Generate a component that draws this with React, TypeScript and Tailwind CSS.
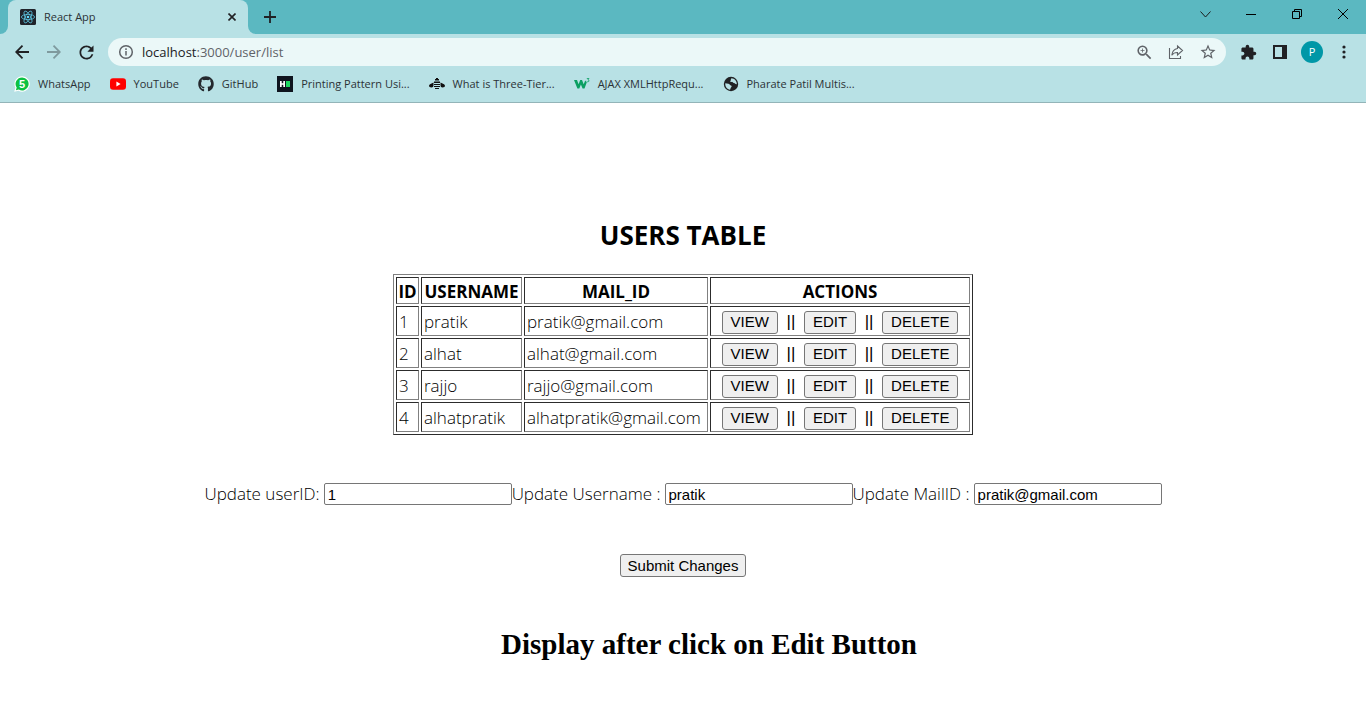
import type { ReactNode } from 'react';
import { FaGithub } from 'react-icons/fa';
import { MdExtension, MdStarBorder, MdZoomIn, MdRefresh } from 'react-icons/md';

type User = { id: number; name: string; mail: string };

const users: User[] = [
  { id: 1, name: 'pratik', mail: 'pratik@gmail.com' },
  { id: 2, name: 'alhat', mail: 'alhat@gmail.com' },
  { id: 3, name: 'rajjo', mail: 'rajjo@gmail.com' },
  { id: 4, name: 'alhatpratik', mail: 'alhatpratik@gmail.com' },
];

const ReactLogo = () => (
  <svg width="16" height="16" viewBox="0 0 16 16" className="shrink-0">
    <rect width="16" height="16" rx="1.5" fill="#20232a" />
    <g fill="none" stroke="#5cc4e0" strokeWidth="0.8">
      <ellipse cx="8" cy="8" rx="6.6" ry="2.6" />
      <ellipse cx="8" cy="8" rx="6.6" ry="2.6" transform="rotate(60 8 8)" />
      <ellipse cx="8" cy="8" rx="6.6" ry="2.6" transform="rotate(120 8 8)" />
    </g>
    <circle cx="8" cy="8" r="1.3" fill="#61dafb" />
  </svg>
);

const WhatsAppIcon = () => (
  <span className="relative flex h-4 w-4 shrink-0 items-center justify-center">
    <svg width="16" height="16" viewBox="0 0 16 16" className="absolute inset-0">
      <path d="M8.2.2a7.7 7.7 0 1 1-3.7 14.5L.2 15.8l1.2-4.2A7.7 7.7 0 0 1 8.2.2Z" fill="#fff" />
      <path d="M8.2 1.4a6.5 6.5 0 1 1-3.4 12.1l-2.9.8.8-2.8A6.5 6.5 0 0 1 8.2 1.4Z" fill="#0cc143" />
    </svg>
    <span className="relative font-['Liberation_Sans',sans-serif] text-[11px] leading-4 font-bold text-white">5</span>
  </span>
);

const YouTubeIcon = () => (
  <svg width="16" height="16" viewBox="0 0 16 16" className="shrink-0">
    <rect y="2.3" width="16" height="11.4" rx="3" fill="#f00" />
    <path d="M6.4 5.6v4.8L10.6 8Z" fill="#fff" />
  </svg>
);

const HackerRankIcon = () => (
  <svg width="16" height="16" viewBox="0 0 16 16" className="shrink-0">
    <rect width="16" height="16" fill="#0e141e" />
    <path d="M3 5h1.7v2.2h1.600V5H8v6H6.300V8.800H4.700V11H3Z" fill="#fff" />
    <rect x="9" y="5" width="4" height="6" fill="#1ed760" />
  </svg>
);

const BeeIcon = () => (
  <svg width="16" height="16" viewBox="0 0 16 16" className="shrink-0" fill="#111">
    <path d="M7 2h2v1H7ZM6 3h4v1.500H6ZM5 5.500h6v1.500H5ZM5 8h6v1H5ZM5 10h6v1H5ZM6 12h4v1H6Z" />
    <path d="M4.500 6.500v2.500c0 1.800-.9 2.500-2 2.500-2.600 0-3.200-2.300-1.500-3.200ZM11.500 6.500v2.500c0 1.800.9 2.500 2 2.500 2.600 0 3.200-2.300 1.500-3.200Z" />
  </svg>
);

const W3Icon = () => (
  <svg width="16" height="16" viewBox="0 0 16 16" className="shrink-0">
    <path d="M0 4h3l1.600 4.200L6.200 4H8l1.700 4.200L11.200 4.500l1.600 1.800-2.300 6.200H8.600L6.900 8.500l-1.600 4H3.400Z" fill="#0a9f62" />
    <path d="M12.800 2.500h2.200l-1.100 1.400c1.500 0 1.500 1.900 0 1.900-.5 0-.8-.1-1.100-.4" fill="none" stroke="#0a9f62" strokeWidth="0.800" />
  </svg>
);

const GlobeIcon = () => (
  <svg width="16" height="16" viewBox="0 0 16 16" className="shrink-0">
    <circle cx="8" cy="8" r="7.200" fill="#202124" />
    <path d="M2.300 7.200l3 .600c1.400.300 1.300 1.400 2.500 1.600 1.300.3.900 1.500.2 2.100-.6.600-.4 1.500-1 2.200-2.700-.400-5.100-3-4.700-6.500Z" fill="#b8e1e5" />
    <path d="M8.500 2.200c-1.400.9 0 1.700-1 2.500-.8.700.3 1.600 1.200 1.200 1-.3 1 1.100 2.300 1 1-.1 1.200 1.500 2.800 1.300C13.900 5 11.400 2.200 8.500 2.200Z" fill="#b8e1e5" />
  </svg>
);

const bookmarks: { icon: ReactNode; label: string }[] = [
  { icon: <WhatsAppIcon />, label: 'WhatsApp' },
  { icon: <YouTubeIcon />, label: 'YouTube' },
  { icon: <FaGithub size={16} className="shrink-0 text-[#24292e]" />, label: 'GitHub' },
  { icon: <HackerRankIcon />, label: 'Printing Pattern Usi...' },
  { icon: <BeeIcon />, label: 'What is Three-Tier...' },
  { icon: <W3Icon />, label: 'AJAX XMLHttpRequ...' },
  { icon: <GlobeIcon />, label: 'Pharate Patil Multis...' },
];

const iconButton = 'flex h-8 w-8 shrink-0 items-center justify-center';

function TabStrip() {
  return (
    <div className="flex h-[34px] items-stretch bg-[#5bb8c1]">
      <div className="w-2 bg-[#b8e1e5]">
        <div className="h-full rounded-br-lg bg-[#5bb8c1]" />
      </div>
      <div className="flex w-60 items-center rounded-t-lg bg-[#b8e1e5] pr-2 pl-3">
        <ReactLogo />
        <span className="ml-2 flex-1 text-[11px]">React App</span>
        <button type="button" aria-label="Close tab" className="flex h-4 w-4 items-center justify-center">
          <svg width="8" height="8" viewBox="0 0 8 8" stroke="#202124" strokeWidth="1.600">
            <path d="M.5.500l7 7M7.500.500l-7 7" />
          </svg>
        </button>
      </div>
      <div className="w-2 bg-[#b8e1e5]">
        <div className="h-full rounded-bl-lg bg-[#5bb8c1]" />
      </div>
      <button type="button" aria-label="New tab" className="flex w-7 items-center justify-center">
        <svg width="12" height="12" viewBox="0 0 12 12" stroke="#202124" strokeWidth="1.800">
          <path d="M6 0v12M0 6h12" />
        </svg>
      </button>
      <div className="ml-auto flex h-7 items-stretch">
        <button type="button" aria-label="Search tabs" className="flex w-[46px] items-center justify-center">
          <svg width="11" height="7" viewBox="0 0 11 7" fill="none" stroke="#1c1c1c">
            <path d="M.5.500l5 5.500 5-5.500" />
          </svg>
        </button>
        <button type="button" aria-label="Minimize" className="flex w-[46px] items-center justify-center">
          <svg width="10" height="10" viewBox="0 0 10 10" stroke="#000">
            <path d="M0 5.500h10" />
          </svg>
        </button>
        <button type="button" aria-label="Restore" className="flex w-[46px] items-center justify-center">
          <svg width="10" height="10" viewBox="0 0 10 10" fill="none" stroke="#000">
            <path d="M.5 2.500h7v7h-7ZM2.500 2.500v-2h7v7h-2" />
          </svg>
        </button>
        <button type="button" aria-label="Close" className="flex w-[46px] items-center justify-center">
          <svg width="10" height="10" viewBox="0 0 10 10" stroke="#000">
            <path d="M0 0l10 10M10 0L0 10" />
          </svg>
        </button>
      </div>
    </div>
  );
}

function Toolbar() {
  return (
    <div className="flex h-9 items-center pr-1.5 pl-1.5 text-[#202124]">
      <button type="button" aria-label="Back" className={iconButton}>
        <svg width="14" height="14" viewBox="0 0 14 14" fill="none" stroke="#202124" strokeWidth="1.800">
          <path d="M14 7H1.500M7.500.700L1.200 7l6.300 6.300" />
        </svg>
      </button>
      <button type="button" aria-label="Forward" className={iconButton}>
        <svg width="14" height="14" viewBox="0 0 14 14" fill="none" stroke="#7f9a9e" strokeWidth="1.800">
          <path d="M0 7h12.500M6.500.700L12.800 7l-6.300 6.300" />
        </svg>
      </button>
      <button type="button" aria-label="Reload" className={iconButton}>
        <MdRefresh size={21} />
      </button>
      <div className="ml-1.5 flex h-7 flex-1 items-center rounded-full bg-[#ebf8f8] pr-2.5 pl-2.5 text-[#5f6368]">
        <svg width="16" height="16" viewBox="0 0 16 16" fill="none" stroke="#5f6368" strokeWidth="1.500" className="shrink-0">
          <circle cx="8" cy="8" r="6.300" />
          <path d="M8 7v4.500M8 4.300v1.600" />
        </svg>
        <span className="ml-2 flex-1 pt-0.5 text-[13px]">
          <span className="text-[#202124]">localhost</span>:3000/user/list
        </span>
        <button type="button" aria-label="Zoom" className="flex h-4 w-4 items-center justify-center">
          <MdZoomIn size={19} className="shrink-0" />
        </button>
        <button type="button" aria-label="Share" className="ml-4 flex h-4 w-4 items-center justify-center">
          <svg width="16" height="16" viewBox="0 0 16 16" fill="none" stroke="#5f6368" strokeWidth="1.100" className="shrink-0">
            <path d="M1.500 4v10.500h11v-2.500" />
            <path d="M9.500 2l5 4.500-5 4.500V8.500C7 8.400 5.200 9.200 3.800 11.200 4.200 7.500 6.200 5 9.500 4.500Z" />
          </svg>
        </button>
        <button type="button" aria-label="Bookmark" className="ml-4 flex h-4 w-4 items-center justify-center">
          <MdStarBorder size={18} className="shrink-0" />
        </button>
      </div>
      <button type="button" aria-label="Extensions" className={`${iconButton} ml-1.5`}>
        <MdExtension size={17} />
      </button>
      <button type="button" aria-label="Side panel" className={iconButton}>
        <svg width="14" height="14" viewBox="0 0 14 14">
          <path fillRule="evenodd" d="M0 0h14v14H0ZM2 2h7v10H2Z" fill="#202124" />
        </svg>
      </button>
      <button type="button" aria-label="Profile" className={iconButton}>
        <span className="flex h-[22px] w-[22px] items-center justify-center rounded-full bg-[#0097a7] text-[11px] text-white">P</span>
      </button>
      <button type="button" aria-label="Menu" className={iconButton}>
        <svg width="4" height="14" viewBox="0 0 4 14" fill="#202124">
          <circle cx="2" cy="2" r="1.600" />
          <circle cx="2" cy="7" r="1.600" />
          <circle cx="2" cy="12" r="1.600" />
        </svg>
      </button>
    </div>
  );
}

const buttonBase =
  "h-[23px] rounded-[3px] border border-[#767676] bg-[#efefef] font-['Liberation_Sans',Arial,sans-serif] text-[15px] leading-5 text-black";
const textInput =
  "ml-1 h-[22px] w-[188px] rounded-[2px] border border-[#767676] bg-white px-[3px] font-['Liberation_Sans',Arial,sans-serif] text-[15px] leading-5 text-black";
const cell = 'border border-t-[#2c2c2c] border-r-[#808080] border-b-[#808080] border-l-[#2c2c2c] pt-0.5';
const divider = "w-[26px] text-center font-['Liberation_Sans',Arial,sans-serif]";

export default function App() {
  return (
    <div className="min-h-screen bg-white font-['Open_Sans','Noto_Sans',sans-serif] text-black">
      <header className="border-b border-[#93b4b8] bg-[#b8e1e5] text-[#2b3236]">
        <TabStrip />
        <Toolbar />
        <nav aria-label="Bookmarks" className="flex h-8 items-center gap-[19px] pb-1 pl-3.5 text-[11px] whitespace-nowrap">
          {bookmarks.map((b) => (
            <a key={b.label} href="#" className="flex items-center gap-2">
              {b.icon}
              {b.label}
            </a>
          ))}
        </nav>
      </header>

      <main className="flex flex-col items-center pt-[114px] text-[17px] font-[360]">
        <h2 className="text-[26px] leading-9 font-bold">USERS TABLE</h2>
        <table className="mt-[21px] w-[580px] table-fixed border-separate border-spacing-[2px] border border-t-[#808080] border-r-[#2c2c2c] border-b-[#2c2c2c] border-l-[#808080] leading-[22px] whitespace-nowrap">
          <colgroup>
            <col className="w-[23px]" />
            <col className="w-[101px]" />
            <col className="w-[184px]" />
            <col />
          </colgroup>
          <thead>
            <tr className="h-[27px]">
              <th className={`${cell} px-px`}>ID</th>
              <th className={`${cell} px-px`}>USERNAME</th>
              <th className={`${cell} px-px`}>MAIL_ID</th>
              <th className={`${cell} px-px`}>ACTIONS</th>
            </tr>
          </thead>
          <tbody>
            {users.map((u) => (
              <tr key={u.id} className="h-[30px]">
                <td className={`${cell} pl-0.5`}>{u.id}</td>
                <td className={`${cell} pl-0.5`}>{u.name}</td>
                <td className={`${cell} pl-0.5`}>{u.mail}</td>
                <td className={`${cell} px-px`}>
                  <div className="flex items-center justify-center">
                    <button type="button" className={`${buttonBase} px-2`}>VIEW</button>
                    <span className={divider}>||</span>
                    <button type="button" className={`${buttonBase} px-2`}>EDIT</button>
                    <span className={divider}>||</span>
                    <button type="button" className={`${buttonBase} px-2`}>DELETE</button>
                  </div>
                </td>
              </tr>
            ))}
          </tbody>
        </table>

        <form className="flex flex-col items-center" onSubmit={(e) => e.preventDefault()}>
          <div className="mt-[47px] flex items-center leading-6 whitespace-nowrap">
            <label htmlFor="user-id">Update userID:</label>
            <input id="user-id" type="text" defaultValue="1" className={textInput} />
            <label htmlFor="user-name">Update Username :</label>
            <input id="user-name" type="text" defaultValue="pratik" className={textInput} />
            <label htmlFor="user-mail">Update MailID :</label>
            <input id="user-mail" type="text" defaultValue="pratik@gmail.com" className={textInput} />
          </div>
          <button type="submit" className={`${buttonBase} mt-12 px-[7px]`}>Submit Changes</button>
        </form>

        <h1 className="mt-12 pl-[52px] font-['Liberation_Serif','Times_New_Roman',serif] text-[29px] leading-[38px] font-bold">
          Display after click on Edit Button
        </h1>
      </main>
    </div>
  );
}
